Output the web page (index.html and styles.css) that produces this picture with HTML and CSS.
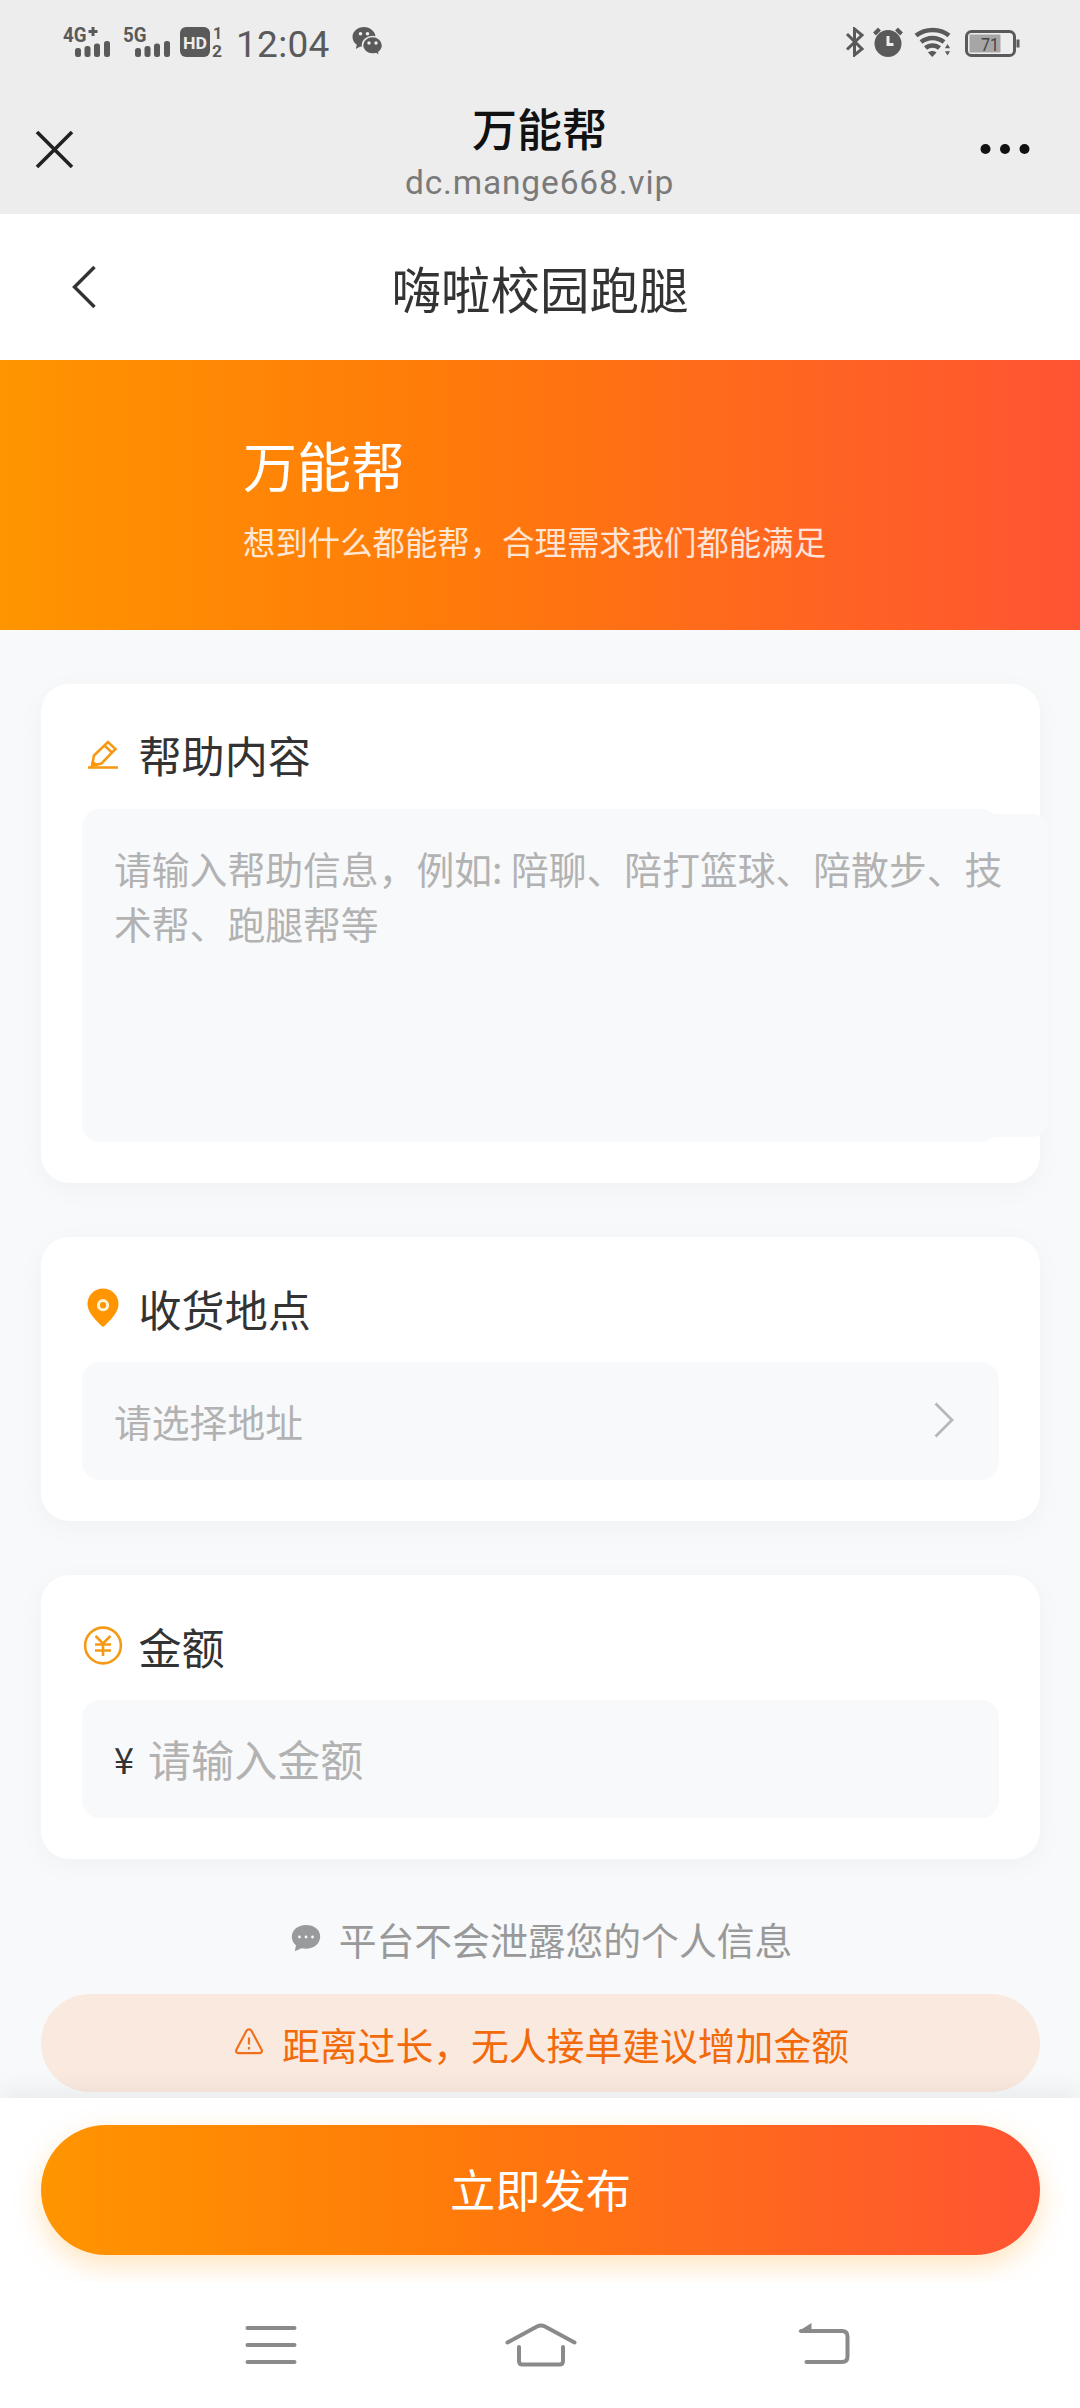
FILE: index.html
```html
<!DOCTYPE html>
<html lang="zh-CN">
<head>
<meta charset="utf-8">
<title>万能帮</title>
<link rel="stylesheet" href="styles.css">
</head>
<body>
<div class="screen">
  <div class="statusbar">
    <div class="status-left">
      <svg class="signal" width="48" height="42" viewBox="0 -5 48 42"><text x="0" y="16" textLength="23.500" lengthAdjust="spacingAndGlyphs">4G</text><path class="thin" d="M30 1v9M25.500 5.500h9"/><rect x="12" y="22" width="6" height="9" rx="2.500"/><rect x="21.500" y="20" width="6" height="11" rx="2.500"/><rect x="31" y="17.500" width="6" height="13.500" rx="2.500"/><rect x="41" y="15" width="6" height="16" rx="2.500"/></svg>
      <svg class="signal" width="48" height="42" viewBox="0 -5 48 42"><text x="0" y="16" textLength="23.500" lengthAdjust="spacingAndGlyphs">5G</text><rect x="12" y="22" width="6" height="9" rx="2.500"/><rect x="21.500" y="20" width="6" height="11" rx="2.500"/><rect x="31" y="17.500" width="6" height="13.500" rx="2.500"/><rect x="41" y="15" width="6" height="16" rx="2.500"/></svg>
      <svg class="hd" width="44" height="42" viewBox="0 -5 44 42"><rect x="0" y="1" width="30" height="30" rx="6"/><text class="hd-text" x="3" y="22.500" textLength="24" lengthAdjust="spacingAndGlyphs">HD</text><text class="hd-num" x="33" y="12.500">1</text><text class="hd-num" x="32" y="30.500" textLength="10" lengthAdjust="spacingAndGlyphs">2</text></svg>
      <span class="clock">12:04</span>
      <svg class="wechat" width="31" height="31" viewBox="0 0 31 31"><path d="M12 1C5.500 1 .5 5.500.5 11c0 3.200 1.700 6 4.300 7.800L3.800 23l4.500-2.500c1.200.3 2.400.5 3.700.5C18 21 23.500 16.500 23.500 11S18 1 12 1z"/><path class="cut" d="M20.500 10.500c-5.500 0-10 3.900-10 8.800s4.500 8.800 10 8.800c1.200 0 2.300-.2 3.300-.5l3.900 2.200-.9-3.500c2.300-1.600 3.700-4.100 3.700-7 0-4.900-4.500-8.800-10-8.800z"/><circle class="eye" cx="8.500" cy="7.800" r="1.800"/><circle class="eye" cx="15.500" cy="7.800" r="1.800"/><circle class="eye" cx="17" cy="17" r="1.700"/><circle class="eye" cx="24" cy="17" r="1.700"/></svg>
    </div>
    <div class="status-right">
      <svg width="20" height="30" viewBox="0 0 20 30"><path class="line" d="M2 7l15 15-7.500 6V2L17 8 2 22.500"/></svg>
      <svg class="alarm" width="30" height="30" viewBox="0 0 30 30"><circle cx="15" cy="16.500" r="13.500"/><path class="line-wide" d="M1.500 7l5-5M23.500 2l5 5"/><path class="hand" d="M15 9v8.500h5.500"/></svg>
      <svg class="wifi" width="38" height="30" viewBox="0 0 38 30"><path class="arc" d="M2 8.500c9.500-7.500 24-7.500 33 0M7 15c7-5.500 16-5.500 23 0M11.500 21c4-3.500 10-3.500 14 0"/><path d="M14 25.500c2.500-2 6-2 8.500 0L18.300 30z"/><path class="cut" d="M29.500 22l4-6.500 4 6.500zM29.500 23.500h8l-4 6.500z"/></svg>
      <svg class="battery" width="55" height="30" viewBox="0 0 55 30"><rect class="shell" x="1.500" y="4.500" width="48" height="24" rx="5"/><rect class="charge" x="4.500" y="7.500" width="31" height="18" rx="1"/><path class="line" d="M53 12.500v8"/><text class="pct" x="16" y="23.500" textLength="18" lengthAdjust="spacingAndGlyphs">71</text></svg>
    </div>
  </div>

  <div class="browserbar">
    <svg class="close" width="41" height="41" viewBox="0 0 41 41"><path d="M3 3l35 35M38 3L3 38"/></svg>
    <div class="site">
      <div class="site-title">万能帮</div>
      <div class="site-url">dc.mange668.vip</div>
    </div>
    <svg class="more" width="50" height="12" viewBox="0 0 50 12"><circle cx="5.500" cy="6" r="5"/><circle cx="25" cy="6" r="5"/><circle cx="44.500" cy="6" r="5"/></svg>
  </div>

  <div class="pagebar">
    <svg class="back" width="26" height="46" viewBox="0 0 26 46"><path d="M23.500 3L3.500 23l20 20"/></svg>
    <h1 class="page-title">嗨啦校园跑腿</h1>
  </div>

  <div class="hero">
    <h2 class="hero-title">万能帮</h2>
    <p class="hero-sub">想到什么都能帮，合理需求我们都能满足</p>
  </div>

  <div class="content">
    <section class="card card-help">
      <div class="card-head">
        <svg class="icon" width="40" height="40" viewBox="0 0 40 40"><path class="stroke" d="M5 32.500h30"/><path class="stroke" d="M9 30.500l2-10L25 7l7.500 7L18.500 28.500zM21.500 10.500l7.500 7"/><path class="fill" d="M8 32l1.500-7 6 5.500z"/></svg>
        <span>帮助内容</span>
      </div>
      <div class="field field-area"><div class="textarea">请输入帮助信息，例如: 陪聊、陪打篮球、陪散步、技术帮、跑腿帮等</div></div>
    </section>

    <section class="card">
      <div class="card-head">
        <svg class="icon" width="40" height="40" viewBox="0 0 40 40"><path class="fill" d="M20 .5C11.500.5 4.500 7.200 4.500 15.700c0 6 3.500 11 7.500 15.500 2.500 2.800 5 5.300 8 7.800 3-2.500 5.500-5 8-7.800 4-4.500 7.500-9.500 7.500-15.500C35.500 7.200 28.500.5 20 .5z"/><circle class="ring" cx="20" cy="17.200" r="4.600"/></svg>
        <span>收货地点</span>
      </div>
      <div class="field field-row">
        <span class="placeholder">请选择地址</span>
        <svg class="chevron" width="22" height="38" viewBox="0 0 22 38"><path d="M2.500 2.500L19 19 2.500 35.500"/></svg>
      </div>
    </section>

    <section class="card">
      <div class="card-head">
        <svg class="icon" width="40" height="40" viewBox="0 0 40 40"><circle class="stroke" cx="20" cy="19.500" r="17.900"/><path class="stroke" d="M12.500 10l7.500 7.500 7.500-7.500M12 18.500h16M12 24.500h16M20 17.500V30"/></svg>
        <span>金额</span>
      </div>
      <div class="field field-row field-amount">
        <span class="yen">¥</span>
        <span class="placeholder amount">请输入金额</span>
      </div>
    </section>

    <div class="privacy">
      <svg width="30" height="30" viewBox="0 0 30 30"><path d="M15 2C7 2 .8 7 .8 13.500c0 4 1.800 6.800 4.200 8.800l-1.200 6 6.800-3c1.400.3 2.900.5 4.400.5 8 0 14.200-5.500 14.200-12.300S23 2 15 2z"/><circle class="dot" cx="8.500" cy="14" r="1.400"/><circle class="dot" cx="15" cy="14" r="1.400"/><circle class="dot" cx="21.500" cy="14" r="1.400"/></svg>
      <span>平台不会泄露您的个人信息</span>
    </div>

    <div class="notice">
      <svg width="30" height="28" viewBox="0 0 30 28"><path d="M12.500 2.800L2.500 21.500c-1 2 .2 3.700 2.300 3.700h20.400c2.100 0 3.300-1.700 2.300-3.700l-10-18.700c-1.200-2-3.800-2-5 0zM15 9.500v7M15 19v2.500"/></svg>
      <span>距离过长，无人接单建议增加金额</span>
    </div>
  </div>

  <div class="footer">
    <div class="submit">立即发布</div>
  </div>

  <div class="sysnav">
    <svg width="52" height="48" viewBox="0 0 52 48"><path d="M2.500 7h47M2.500 24h47M2.500 41h47"/></svg>
    <svg class="home" width="72" height="48" viewBox="0 0 72 48"><path d="M2.500 21.500L32 5.500q4-2 8 0l29.500 16M14 26v14q0 3.500 3.500 3.500h37q3.500 0 3.500-3.500V26"/></svg>
    <svg width="54" height="48" viewBox="0 0 54 48"><path d="M4 10h41q5.500 0 5.500 5.500v20q0 5.500-5.500 5.500H9.500"/><path class="head" d="M1 10.500L14.500 2v9z"/></svg>
  </div>
</div>
</body>
</html>
```
FILE: styles.css
```css
* { box-sizing: border-box; margin: 0; padding: 0; }

body {
  width: 1080px;
  background: #f7f9fb;
  font-family: "Noto Sans CJK SC", sans-serif;
  color: #333;
}

svg { display: block; flex: none; }

.screen {
  width: 1080px;
  height: 2408px;
  display: flex;
  flex-direction: column;
  overflow: hidden;
}

/* system status bar */
.statusbar {
  height: 84px;
  padding: 0 60px 0 63px;
  display: flex;
  justify-content: space-between;
  background: #ededed;
  fill: #5a5a5a;
  color: #5a5a5a;
}

.status-left { display: flex; padding-top: 21px; }
.signal { margin-right: 12px; }
.signal text { font: bold 20px Roboto, sans-serif; }
.thin { fill: none; stroke: #5a5a5a; stroke-width: 3; }
.hd { margin: 0 12px 0 -3px; }
.hd-text { font: bold 17px Roboto, sans-serif; fill: #ededed; }
.hd-num { font: bold 16px Roboto, sans-serif; }
.clock { width: 116px; margin-top: 5px; font: 37px/37px Roboto, sans-serif; letter-spacing: 0.3px; }
.wechat { margin-top: 5px; }
.cut { stroke: #ededed; stroke-width: 1.5; }
.eye { fill: #ededed; }

.status-right { display: flex; padding-top: 27px; }
.alarm { margin-left: 8px; }
.wifi { margin-left: 11px; }
.battery { margin-left: 13px; }
.line { fill: none; stroke: #5a5a5a; stroke-width: 3; }
.line-wide { fill: none; stroke: #5a5a5a; stroke-width: 4; }
.hand { fill: none; stroke: #ededed; stroke-width: 3; }
.arc { fill: none; stroke: #5a5a5a; stroke-width: 4.5; }
.shell { fill: none; stroke: #5a5a5a; stroke-width: 3; }
.charge { fill: #a6a6a6; }
.pct { font: 19px Roboto, sans-serif; fill: #444; }

/* in-app browser bar */
.browserbar {
  height: 130px;
  padding: 0 50px 0 34px;
  display: flex;
  justify-content: space-between;
  background: #ededed;
}

.close { margin-top: 45px; fill: none; stroke: #222; stroke-width: 3.6; }
.more { margin-top: 59px; fill: #111; }
.site { margin-left: 24px; text-align: center; }
.site-title { font-size: 45px; line-height: 60px; margin-top: 14px; font-weight: 500; color: #111; }
.site-url { font: 33.5px/44px Roboto, sans-serif; margin-top: 3px; color: #7a7a7a; letter-spacing: 0.85px; }

/* page title bar */
.pagebar {
  height: 146px;
  padding: 0 71px;
  display: flex;
  align-items: center;
  background: #fff;
}

.back { fill: none; stroke: #333; stroke-width: 3.4; }
.page-title { flex: 1; margin-right: 26px; padding-top: 2px; text-align: center; font-size: 49.5px; line-height: 60px; font-weight: 400; }

/* hero banner */
.hero {
  height: 270px;
  padding: 70px 243px 0;
  background: linear-gradient(90deg, #ff9500 0%, #ff7a0a 42%, #ff5433 100%);
  color: #fff;
}

.hero-title { font-size: 54px; line-height: 70px; font-weight: 400; }
.hero-sub { margin-top: 17px; font-size: 32.4px; line-height: 48px; white-space: nowrap; opacity: 0.82; }

/* form cards */
.content {
  height: 1468px;
  padding: 54px 40px 0 41px;
  display: flex;
  flex-direction: column;
  gap: 53.5px;
}

.card {
  padding: 41px;
  border-radius: 28px;
  background: #fff;
  box-shadow: 0 6px 28px rgba(0, 0, 0, 0.035);
}

.card-head {
  height: 60px;
  margin-bottom: 24px;
  display: flex;
  align-items: center;
  gap: 16px;
  font-size: 43.1px;
  line-height: 60px;
}

.card-help .card-head span { margin-top: -2px; }
.icon { margin-left: 0.5px; }
.icon .stroke { fill: none; stroke: #f59a16; stroke-width: 2.6; }
.icon .fill { fill: #ff9500; }
.icon .ring { fill: #ff9500; stroke: #fff4d8; stroke-width: 3; }

.field { border-radius: 18px; background: #f8f9fa; color: #b2b2b2; font-size: 37.8px; }
.field-area { height: 333px; padding: 5px 0; }
.textarea {
  width: 966px;
  height: 323px;
  padding: 27px 35px 27px 32px;
  border-radius: 16px;
  background: #f8f9fb;
  line-height: 54.7px;
  word-break: break-all;
}

.field-row { height: 118.5px; padding: 0 44px 0 32px; display: flex; align-items: center; }
.field-amount { padding-bottom: 2px; }
.placeholder { flex: 1; line-height: 56px; }
.yen { width: 34px; color: #333; font-size: 36px; }
.amount { font-size: 43.1px; }
.chevron { margin-top: -1px; fill: none; stroke: #b8b8b8; stroke-width: 2.8; }

.privacy {
  height: 60px;
  margin-top: -4px;
  padding: 1px 0 0 2px;
  display: flex;
  justify-content: center;
  align-items: center;
  gap: 18px;
  font-size: 37.8px;
  line-height: 60px;
  color: #999;
}
.privacy svg { margin-top: -3px; fill: #999a9c; }
.privacy .dot { fill: #f7f9fb; }

.notice {
  height: 98px;
  margin-top: -28px;
  padding-left: 2px;
  display: flex;
  justify-content: center;
  align-items: center;
  gap: 18px;
  border-radius: 49px;
  background: #fae9df;
  font-size: 37.8px;
  color: #f26a0a;
}
.notice svg { margin-top: -3px; fill: none; stroke: #f0701c; stroke-width: 2.2; }

/* submit bar */
.footer {
  position: relative;
  height: 184px;
  padding: 27px 40px 0 41px;
  background: #fff;
  box-shadow: 0 -4px 28px rgba(0, 0, 0, 0.08);
}

.submit {
  height: 130px;
  border-radius: 65px;
  background: linear-gradient(90deg, #ff9500 0%, #ff7a0a 42%, #ff5433 100%);
  box-shadow: 0 10px 28px rgba(255, 149, 0, 0.26);
  text-align: center;
  font-size: 45.3px;
  line-height: 127px;
  color: #fff;
}

/* system navigation */
.sysnav {
  position: relative;
  flex: 1;
  padding: 39px 229px 0 245px;
  display: flex;
  justify-content: space-between;
  align-items: flex-start;
  background: #fff;
  fill: none;
  stroke: #8a8a8a;
  stroke-width: 4;
  stroke-linecap: round;
}
.sysnav .home { margin-right: 12px; }
.sysnav .head { fill: #8a8a8a; stroke: none; }
```
